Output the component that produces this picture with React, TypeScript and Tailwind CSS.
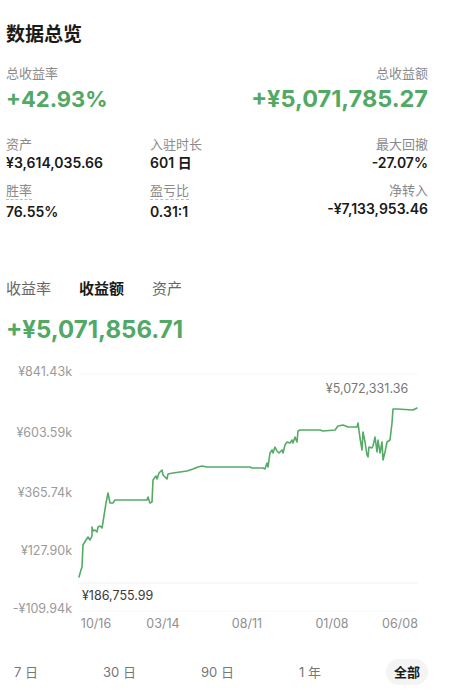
const pts: [number, number][] = [
  [79, 577], [81, 570], [82, 567], [83, 545], [86, 540], [88, 537], [90, 540], [92, 536],
  [92, 527], [93, 531], [95, 530], [97, 532], [98, 527], [100, 526], [102, 528], [103, 522],
  [106, 503], [108, 493], [110, 503], [113, 503], [115, 500], [147, 500], [148, 497], [150, 503],
  [152, 502], [153, 480], [156, 476], [157, 479], [159, 473], [162, 470], [163, 475], [167, 479],
  [168, 474], [173, 473], [180, 472], [187, 471], [193, 469], [198, 467], [202, 466], [207, 467],
  [250, 467], [252, 468], [263, 468], [265, 469], [267, 463], [268, 467], [270, 453], [272, 450],
  [273, 453], [275, 447], [277, 451], [279, 453], [282, 450], [283, 453], [285, 445], [287, 442],
  [290, 443], [292, 440], [293, 443], [295, 437], [297, 442], [298, 431], [300, 430], [320, 430],
  [323, 431], [335, 430], [338, 426], [343, 425], [348, 427], [357, 427], [358, 423], [360, 438],
  [362, 450], [363, 432], [365, 442], [367, 455], [368, 457], [369, 447], [372, 448], [373, 446],
  [375, 437], [377, 452], [378, 440], [380, 453], [382, 442], [383, 460], [385, 452], [387, 442],
  [390, 440], [392, 423], [393, 409], [397, 409], [413, 410], [417, 408],
];

const OY = 360;
const linePath = pts.map(([x, y], i) => `${i ? 'L' : 'M'}${x} ${y - OY}`).join(' ');

const yLabels = [
  { t: '¥841.43k', y: 372 },
  { t: '¥603.59k', y: 433 },
  { t: '¥365.74k', y: 493 },
  { t: '¥127.90k', y: 551 },
  { t: '-¥109.94k', y: 609 },
];

const xLabels = [
  { t: '10/16', x: 96 },
  { t: '03/14', x: 163 },
  { t: '08/11', x: 247 },
  { t: '01/08', x: 332 },
  { t: '06/08', x: 400 },
];

const FONT = 'Inter, "Noto Sans CJK SC", sans-serif';

function Stat({ label, value, align = 'left', dashed = false }: { label: string; value: string; align?: 'left' | 'right'; dashed?: boolean }) {
  return (
    <div className={align === 'right' ? 'text-right' : ''}>
      <div className="text-[13px] leading-[18px] text-[#8a8a8a]">
        <span className={dashed ? 'border-b border-dashed border-[#bbb] pb-[1px]' : ''}>{label}</span>
      </div>
      <div className={`${dashed ? 'mt-[3px]' : ''} text-[14px] leading-[20px] font-semibold text-[#1a1a1a]`}>{value}</div>
    </div>
  );
}

function ProfitChart() {
  return (
    <svg width={454} height={275} viewBox="0 0 454 275" className="block mt-[15px]" style={{ fontFamily: FONT }}>
      <line x1={78} x2={418} y1={374 - OY} y2={374 - OY} stroke="#f7f7f7" />
      <line x1={78} x2={418} y1={583 - OY} y2={583 - OY} stroke="#efefef" />
      <line x1={78} x2={418} y1={611 - OY} y2={611 - OY} stroke="#f7f7f7" />
      {yLabels.map((l) => (
        <text key={l.t} x={72} y={l.y - OY + 4} textAnchor="end" fontSize={12.5} fill="#9a9a9a">
          {l.t}
        </text>
      ))}
      {xLabels.map((l) => (
        <text key={l.t} x={l.x} y={624 - OY + 4} textAnchor="middle" fontSize={12.5} fill="#8f8f8f">
          {l.t}
        </text>
      ))}
      <path d={linePath} fill="none" stroke="#55ab66" strokeWidth={1.6} strokeLinejoin="round" strokeLinecap="round" />
      <text x={367} y={389 - OY + 4} textAnchor="middle" fontSize={12.5} fill="#777">
        ¥5,072,331.36
      </text>
      <text x={82} y={596 - OY + 4} fontSize={12.5} fill="#3a3a3a">
        ¥186,755.99
      </text>
    </svg>
  );
}

export default function App() {
  const ranges = ['7 日', '30 日', '90 日', '1 年'];
  return (
    <div className="w-[454px] h-[691px] bg-white overflow-hidden" style={{ fontFamily: FONT }}>
      <div className="pl-[6px] pr-[26px] pt-[22px]">
        <h1 className="text-[19px] leading-[26px] font-bold text-[#1a1a1a]">数据总览</h1>

        <div className="mt-[16px] flex justify-between items-end">
          <div>
            <div className="text-[13px] leading-[18px] text-[#8a8a8a]">总收益率</div>
            <div className="mt-[3px] text-[22px] leading-[28px] font-bold text-[#52a865]">+42.93%</div>
          </div>
          <div className="text-right">
            <div className="text-[13px] leading-[18px] text-[#8a8a8a]">总收益额</div>
            <div className="mt-[3px] text-[23.5px] leading-[28px] font-bold text-[#52a865]">+¥5,071,785.27</div>
          </div>
        </div>

        <div className="mt-[22px] grid grid-cols-[144px_1fr_auto] gap-y-[8px]">
          <Stat label="资产" value="¥3,614,035.66" />
          <Stat label="入驻时长" value="601 日" />
          <Stat label="最大回撤" value="-27.07%" align="right" />
          <Stat label="胜率" value="76.55%" dashed />
          <Stat label="盈亏比" value="0.31:1" dashed />
          <Stat label="净转入" value="-¥7,133,953.46" align="right" />
        </div>

        <div className="mt-[56px] flex gap-[28px] text-[15px] leading-[22px]">
          <span className="text-[#666]">收益率</span>
          <span className="font-bold text-[#1a1a1a]">收益额</span>
          <span className="text-[#666]">资产</span>
        </div>

        <div className="mt-[15px] text-[24px] leading-[30px] font-bold text-[#52a865]">+¥5,071,856.71</div>
      </div>

      <ProfitChart />

      <div className="mt-[24px] pl-[14px] pr-[26px] flex justify-between items-center text-[13px] text-[#777]">
        {ranges.map((r) => (
          <span key={r} className="leading-[26px]">{r}</span>
        ))}
        <span className="px-[8px] leading-[26px] rounded-full bg-[#f4f4f4] font-bold text-[#1a1a1a]">全部</span>
      </div>
    </div>
  );
}
